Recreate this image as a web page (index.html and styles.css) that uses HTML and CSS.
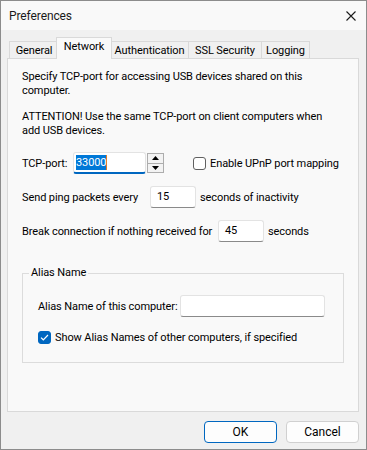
FILE: index.html
```html
<!doctype html>
<html>
  <head>
    <meta charset="utf-8">
    <title>Preferences</title>
    <link rel="stylesheet" href="styles.css">
  </head>
  <body>
    <div class="window">
      <div class="titlebar">
        <span class="title">Preferences</span>
        <svg class="close" width="10" height="10" viewBox="0 0 10 10">
          <path d="M0.5 0.5 L9.5 9.5 M9.5 0.5 L0.5 9.5" stroke="#1a1a1a" stroke-width="1.1" fill="none"/>
        </svg>
      </div>

      <div class="body">
        <div class="tabs">
          <span class="tab tab-general">General</span>
          <span class="tab tab-network active">Network</span>
          <span class="tab tab-auth">Authentication</span>
          <span class="tab tab-ssl">SSL Security</span>
          <span class="tab tab-log">Logging</span>
        </div>

        <div class="page">
          <p class="note">Specify TCP-port for accessing USB devices shared on this computer.</p>
          <p class="note">ATTENTION! Use the same TCP-port on client computers when add USB devices.</p>

          <div class="row first">
            <span class="label label-port">TCP-port:</span>
            <span class="edit port focused"><span class="sel">33000</span></span>
            <span class="spin">
              <span class="spin-btn"><svg width="7" height="4" viewBox="0 0 7 4"><path d="M0 4 L3.5 0 L7 4 Z" fill="#000"/></svg></span>
              <span class="spin-btn"><svg width="7" height="4" viewBox="0 0 7 4"><path d="M0 0 L3.5 4 L7 0 Z" fill="#000"/></svg></span>
            </span>
            <span class="check upnp"><span class="box"></span>Enable UPnP port mapping</span>
          </div>

          <div class="row">
            <span class="label label-ping">Send ping packets every</span>
            <span class="edit short">15</span>
            <span>seconds of inactivity</span>
          </div>

          <div class="row">
            <span class="label label-break">Break connection if nothing received for</span>
            <span class="edit short">45</span>
            <span>seconds</span>
          </div>

          <fieldset class="group">
            <legend>Alias Name</legend>
            <div class="row">
              <span class="label label-alias">Alias Name of this computer:</span>
              <span class="edit alias"></span>
            </div>
            <div class="row check-row">
              <span class="check"><span class="box checked"><svg width="9" height="7" viewBox="0 0 9 7"><path d="M1 3.6 L3.3 5.8 L8 1" stroke="#fff" stroke-width="1.2" fill="none"/></svg></span>Show Alias Names of other computers, if specified</span>
            </div>
          </fieldset>
        </div>

        <div class="buttons">
          <button class="btn default">OK</button>
          <button class="btn">Cancel</button>
        </div>
      </div>
    </div>
  </body>
</html>
```

FILE: styles.css
```css
html, body {
  margin: 0;
  padding: 0;
  background: #f0f0f0;
}

body {
  font-family: Roboto, "Liberation Sans", sans-serif;
  font-size: 11px;
  letter-spacing: -0.1px;
  color: #000000;
}

.window {
  width: 367px;
  height: 450px;
  box-sizing: border-box;
  border: 1px solid #8c8c8c;
  background: #f0f0f0;
  display: flex;
  flex-direction: column;
}

.titlebar {
  height: 29px;
  background: #f9f9f9;
  display: flex;
  align-items: center;
  justify-content: space-between;
  padding: 0 10px 0 8px;
}

.title {
  color: #1a1a1a;
  font-size: 12px;
}

.close {
  display: block;
}

.body {
  padding: 0 7px 0 6px;
  display: flex;
  flex-direction: column;
}

/* tab strip */
.tabs {
  display: flex;
  align-items: flex-end;
  height: 28px;
  padding-left: 2px;
}

.tab {
  box-sizing: border-box;
  height: 17px;
  line-height: 17px;
  text-align: center;
  border: 1px solid #d9d9d9;
  border-bottom: none;
  margin-right: -1px;
  background: #f0f0f0;
  white-space: nowrap;
}

.tab.active {
  height: 22px;
  line-height: 18px;
  background: #f9f9f9;
  margin: 0 -2px -1px -2px;
  position: relative;
  z-index: 1;
}

.tab-general { width: 50px; }
.tab-network { width: 56px; }
.tab-auth { width: 79px; }
.tab-ssl { width: 74px; }
.tab-log { width: 49px; }

/* tab page */
.page {
  height: 354px;
  box-sizing: border-box;
  border: 1px solid #d9d9d9;
  background: #f9f9f9;
  padding: 11px 14px 0 14px;
}

.note {
  margin: 0 0 12px 0;
  line-height: 14px;
  padding-right: 10px;
}

.row {
  display: flex;
  align-items: center;
  height: 22px;
  margin-top: 12px;
  white-space: nowrap;
}

.row.first {
  margin-top: 14px;
}

.label {
  flex: none;
}

.label-port { min-width: 51px; }
.label-ping { min-width: 128px; }
.label-break { min-width: 196px; }
.label-alias { margin-right: 3px; }

.edit {
  display: inline-block;
  box-sizing: border-box;
  height: 22px;
  line-height: 20px;
  background: #ffffff;
  border: 1px solid #e3e3e3;
  border-bottom-color: #8a8a8a;
  border-radius: 3px;
  padding: 0 6px;
}

.edit.port {
  width: 73px;
  padding-left: 2px;
  border-bottom: 2px solid #0067c0;
}

.sel {
  background: #0078d7;
  color: #ffffff;
  padding: 1px 0;
  border-right: 1px solid #e07a2a;
}

.spin {
  display: flex;
  flex-direction: column;
  width: 17px;
  height: 20px;
  box-sizing: border-box;
  border: 1px solid #adadad;
  margin-left: 1px;
}

.spin-btn {
  flex: 1;
  display: flex;
  align-items: center;
  justify-content: center;
  background: #f3f3f3;
}

.spin-btn + .spin-btn {
  border-top: 1px solid #adadad;
}

.spin-btn svg {
  display: block;
}

.edit.short {
  width: 46px;
  margin-right: 4px;
}

.edit.alias {
  width: 145px;
}

.check {
  display: inline-flex;
  align-items: center;
}

.check.upnp {
  margin-left: 29px;
}

.box {
  width: 13px;
  height: 13px;
  box-sizing: border-box;
  border: 1px solid #606060;
  border-radius: 3px;
  background: #ffffff;
  margin-right: 4px;
  display: flex;
  align-items: center;
  justify-content: center;
}

.box.checked {
  background: #0067c0;
  border-color: #0067c0;
}

.box svg {
  display: block;
}

/* group box */
.group {
  margin: 24px 0 0 0;
  padding: 0 15px 14px 15px;
  border: 1px solid #dcdcdc;
  height: 97px;
  box-sizing: border-box;
}

.group legend {
  padding: 0 2px;
  margin-left: -9px;
  line-height: 14px;
}

.group .row:first-of-type {
  margin-top: 15px;
}

.group .check-row {
  margin-top: 10px;
  height: 20px;
}

/* dialog buttons */
.buttons {
  display: flex;
  justify-content: flex-end;
  gap: 9px;
  margin-top: 9px;
}

.btn {
  width: 73px;
  height: 22px;
  box-sizing: border-box;
  font-family: Roboto, "Liberation Sans", sans-serif;
  font-size: 12px;
  color: #000000;
  background: #fdfdfd;
  border: 1px solid #d0d0d0;
  border-radius: 4px;
  padding: 0;
}

.btn.default {
  border-color: #0067c0;
}
```
